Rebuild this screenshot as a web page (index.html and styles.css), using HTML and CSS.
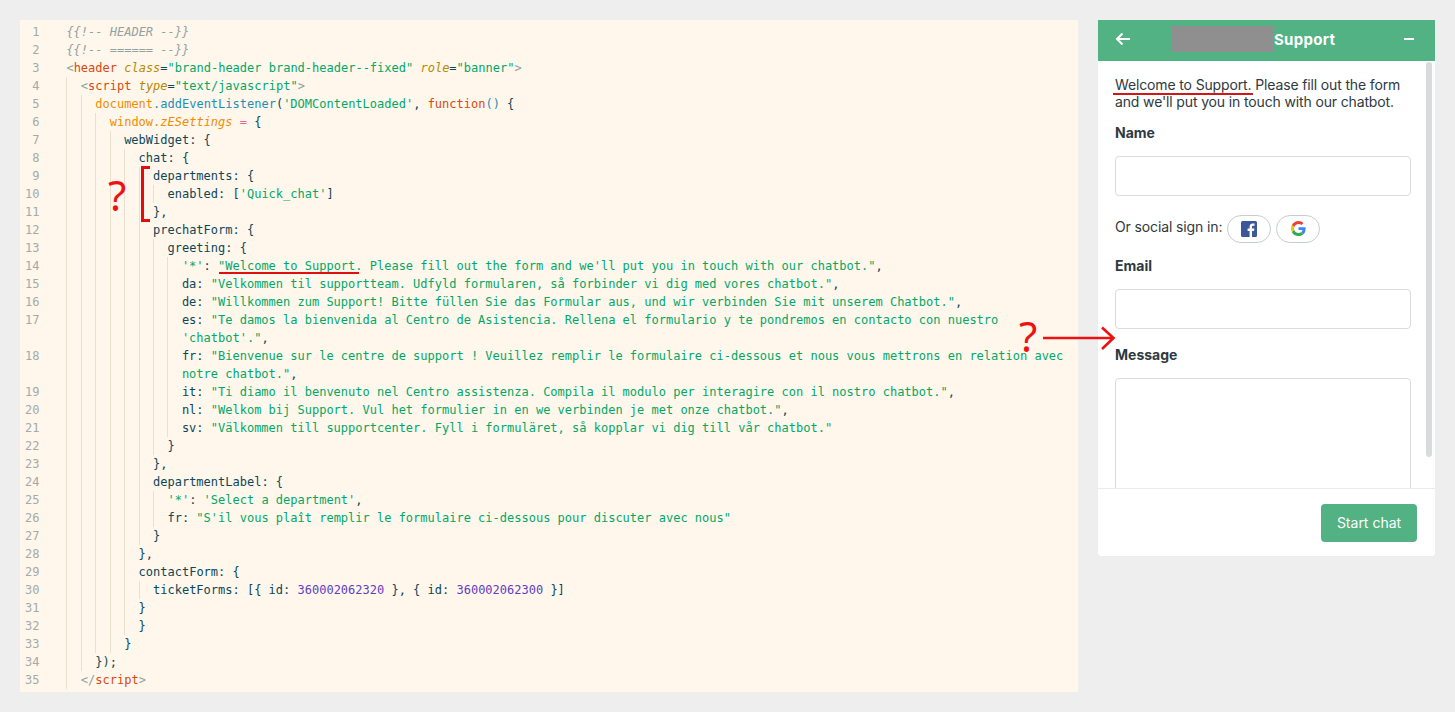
FILE: index.html
```html
<!DOCTYPE html>
<html lang="en">
<head>
<meta charset="utf-8">
<title>Support widget code</title>
<link rel="stylesheet" href="styles.css">
</head>
<body>
<main class="page">
<section class="code">
<div class="row"><span class="num">1</span><span class="txt c">{{!-- HEADER --}}</span></div>
<div class="row"><span class="num">2</span><span class="txt c">{{!-- ====== --}}</span></div>
<div class="row"><span class="num">3</span><span class="txt"><i class="p">&lt;</i><i class="t">header</i> <i class="a">class</i><i class="b">=</i><i class="s">"brand-header brand-header--fixed"</i> <i class="a">role</i><i class="b">=</i><i class="s">"banner"</i><i class="p">&gt;</i></span></div>
<div class="row"><span class="num">4</span><span class="ind"></span><span class="txt"><i class="p">&lt;</i><i class="t">script</i> <i class="a">type</i><i class="b">=</i><i class="s">"text/javascript"</i><i class="p">&gt;</i></span></div>
<div class="row"><span class="num">5</span><span class="ind"></span><span class="ind"></span><span class="txt"><i class="o">document</i><i class="m">.addEventListener</i>(<i class="s">'DOMContentLoaded'</i>, <i class="t">function</i><i class="m">()</i> {</span></div>
<div class="row"><span class="num">6</span><span class="ind"></span><span class="ind"></span><span class="ind"></span><span class="txt"><i class="o">window.</i><i class="oi">zESettings</i> <i class="e">=</i> {</span></div>
<div class="row"><span class="num">7</span><span class="ind"></span><span class="ind"></span><span class="ind"></span><span class="ind"></span><span class="txt">webWidget: {</span></div>
<div class="row"><span class="num">8</span><span class="ind"></span><span class="ind"></span><span class="ind"></span><span class="ind"></span><span class="ind"></span><span class="txt">chat: {</span></div>
<div class="row"><span class="num">9</span><span class="ind"></span><span class="ind"></span><span class="ind"></span><span class="ind"></span><span class="ind"></span><span class="ind"></span><span class="txt">departments: {</span></div>
<div class="row"><span class="num">10</span><span class="ind"></span><span class="ind"></span><span class="ind"></span><span class="ind"></span><span class="ind"></span><span class="ind"></span><span class="ind"></span><span class="txt">enabled: [<i class="s">'Quick_chat'</i>]</span></div>
<div class="row"><span class="num">11</span><span class="ind"></span><span class="ind"></span><span class="ind"></span><span class="ind"></span><span class="ind"></span><span class="ind"></span><span class="txt">},</span></div>
<div class="row"><span class="num">12</span><span class="ind"></span><span class="ind"></span><span class="ind"></span><span class="ind"></span><span class="ind"></span><span class="ind"></span><span class="txt">prechatForm: {</span></div>
<div class="row"><span class="num">13</span><span class="ind"></span><span class="ind"></span><span class="ind"></span><span class="ind"></span><span class="ind"></span><span class="ind"></span><span class="ind"></span><span class="txt">greeting: {</span></div>
<div class="row"><span class="num">14</span><span class="ind"></span><span class="ind"></span><span class="ind"></span><span class="ind"></span><span class="ind"></span><span class="ind"></span><span class="ind"></span><span class="ind"></span><span class="txt"><i class="s">'*'</i>: <i class="s">"Welcome to Support. Please fill out the form and we'll put you in touch with our chatbot."</i>,</span></div>
<div class="row"><span class="num">15</span><span class="ind"></span><span class="ind"></span><span class="ind"></span><span class="ind"></span><span class="ind"></span><span class="ind"></span><span class="ind"></span><span class="ind"></span><span class="txt">da: <i class="s">"Velkommen til supportteam. Udfyld formularen, så forbinder vi dig med vores chatbot."</i>,</span></div>
<div class="row"><span class="num">16</span><span class="ind"></span><span class="ind"></span><span class="ind"></span><span class="ind"></span><span class="ind"></span><span class="ind"></span><span class="ind"></span><span class="ind"></span><span class="txt">de: <i class="s">"Willkommen zum Support! Bitte füllen Sie das Formular aus, und wir verbinden Sie mit unserem Chatbot."</i>,</span></div>
<div class="row"><span class="num">17</span><span class="ind"></span><span class="ind"></span><span class="ind"></span><span class="ind"></span><span class="ind"></span><span class="ind"></span><span class="ind"></span><span class="ind"></span><span class="txt">es: <i class="s">"Te damos la bienvenida al Centro de Asistencia. Rellena el formulario y te pondremos en contacto con nuestro 'chatbot'."</i>,</span></div>
<div class="row"><span class="num">18</span><span class="ind"></span><span class="ind"></span><span class="ind"></span><span class="ind"></span><span class="ind"></span><span class="ind"></span><span class="ind"></span><span class="ind"></span><span class="txt">fr: <i class="s">"Bienvenue sur le centre de support ! Veuillez remplir le formulaire ci-dessous et nous vous mettrons en relation avec notre chatbot."</i>,</span></div>
<div class="row"><span class="num">19</span><span class="ind"></span><span class="ind"></span><span class="ind"></span><span class="ind"></span><span class="ind"></span><span class="ind"></span><span class="ind"></span><span class="ind"></span><span class="txt">it: <i class="s">"Ti diamo il benvenuto nel Centro assistenza. Compila il modulo per interagire con il nostro chatbot."</i>,</span></div>
<div class="row"><span class="num">20</span><span class="ind"></span><span class="ind"></span><span class="ind"></span><span class="ind"></span><span class="ind"></span><span class="ind"></span><span class="ind"></span><span class="ind"></span><span class="txt">nl: <i class="s">"Welkom bij Support. Vul het formulier in en we verbinden je met onze chatbot."</i>,</span></div>
<div class="row"><span class="num">21</span><span class="ind"></span><span class="ind"></span><span class="ind"></span><span class="ind"></span><span class="ind"></span><span class="ind"></span><span class="ind"></span><span class="ind"></span><span class="txt">sv: <i class="s">"Välkommen till supportcenter. Fyll i formuläret, så kopplar vi dig till vår chatbot."</i></span></div>
<div class="row"><span class="num">22</span><span class="ind"></span><span class="ind"></span><span class="ind"></span><span class="ind"></span><span class="ind"></span><span class="ind"></span><span class="ind"></span><span class="txt">}</span></div>
<div class="row"><span class="num">23</span><span class="ind"></span><span class="ind"></span><span class="ind"></span><span class="ind"></span><span class="ind"></span><span class="ind"></span><span class="txt">},</span></div>
<div class="row"><span class="num">24</span><span class="ind"></span><span class="ind"></span><span class="ind"></span><span class="ind"></span><span class="ind"></span><span class="ind"></span><span class="txt">departmentLabel: {</span></div>
<div class="row"><span class="num">25</span><span class="ind"></span><span class="ind"></span><span class="ind"></span><span class="ind"></span><span class="ind"></span><span class="ind"></span><span class="ind"></span><span class="txt"><i class="s">'*'</i>: <i class="s">'Select a department'</i>,</span></div>
<div class="row"><span class="num">26</span><span class="ind"></span><span class="ind"></span><span class="ind"></span><span class="ind"></span><span class="ind"></span><span class="ind"></span><span class="ind"></span><span class="txt">fr: <i class="s">"S'il vous plaît remplir le formulaire ci-dessous pour discuter avec nous"</i></span></div>
<div class="row"><span class="num">27</span><span class="ind"></span><span class="ind"></span><span class="ind"></span><span class="ind"></span><span class="ind"></span><span class="ind"></span><span class="txt">}</span></div>
<div class="row"><span class="num">28</span><span class="ind"></span><span class="ind"></span><span class="ind"></span><span class="ind"></span><span class="ind"></span><span class="txt">},</span></div>
<div class="row"><span class="num">29</span><span class="ind"></span><span class="ind"></span><span class="ind"></span><span class="ind"></span><span class="ind"></span><span class="txt">contactForm: {</span></div>
<div class="row"><span class="num">30</span><span class="ind"></span><span class="ind"></span><span class="ind"></span><span class="ind"></span><span class="ind"></span><span class="ind"></span><span class="txt">ticketForms: [{ id: <i class="n">360002062320</i> }, { id: <i class="n">360002062300</i> }]</span></div>
<div class="row"><span class="num">31</span><span class="ind"></span><span class="ind"></span><span class="ind"></span><span class="ind"></span><span class="ind"></span><span class="txt">}</span></div>
<div class="row"><span class="num">32</span><span class="ind"></span><span class="ind"></span><span class="ind"></span><span class="ind"></span><span class="ind"></span><span class="txt">}</span></div>
<div class="row"><span class="num">33</span><span class="ind"></span><span class="ind"></span><span class="ind"></span><span class="ind"></span><span class="txt">}</span></div>
<div class="row"><span class="num">34</span><span class="ind"></span><span class="ind"></span><span class="txt">});</span></div>
<div class="row row-last"><span class="num">35</span><span class="ind"></span><span class="txt"><i class="p">&lt;/</i><i class="t">script</i><i class="p">&gt;</i></span></div>
</section>

<aside class="widget">
<header class="w-head">
<svg class="w-back" width="16" height="14" viewBox="0 0 16 14" aria-hidden="true"><path d="M15 7H2M7.500 1.500L2 7l5.500 5.500" fill="none" stroke="#fff" stroke-width="2"/></svg>
<span class="w-redact"></span>
<span class="w-title">Support</span>
<span class="w-min"></span>
</header>
<div class="w-body">
<p class="w-intro">Welcome to Support. Please fill out the form and we'll put you in touch with our chatbot.</p>
<div class="w-label w-label-name">Name</div>
<div class="w-input"></div>
<div class="w-social">
<span class="w-social-text">Or social sign in:</span>
<span class="w-pill"><svg width="16" height="16" viewBox="0 0 16 16" aria-hidden="true"><rect width="16" height="16" rx="1.500" fill="#3b5998"/><path d="M11 16V10h2l.4-2.500H11V6c0-.8.300-1.300 1.300-1.300h1.200V2.500C13.200 2.400 12.500 2.400 11.800 2.400 10 2.400 8.600 3.500 8.600 5.600v1.900H6.600V10h2v6z" fill="#fff"/></svg></span>
<span class="w-pill"><svg width="15" height="15" viewBox="0 0 48 48" aria-hidden="true"><path fill="#EA4335" d="M24 9.500c3.500 0 6.700 1.200 9.200 3.600l6.900-6.900C35.900 2.400 30.500 0 24 0 14.600 0 6.500 5.400 2.600 13.200l8 6.200C12.500 13.700 17.800 9.500 24 9.500z"/><path fill="#4285F4" d="M46.900 24.500c0-1.600-.1-3.100-.4-4.500H24v9h12.900c-.6 3-2.200 5.500-4.700 7.200l7.700 6c4.500-4.200 7-10.300 7-17.700z"/><path fill="#FBBC05" d="M10.500 28.600c-.5-1.400-.8-3-.8-4.600s.3-3.200.8-4.600l-8-6.200C.9 16.500 0 20.100 0 24s.9 7.500 2.600 10.800l7.900-6.200z"/><path fill="#34A853" d="M24 48c6.500 0 11.900-2.100 15.900-5.800l-7.700-6c-2.200 1.400-4.900 2.300-8.200 2.300-6.200 0-11.500-4.200-13.400-9.900l-8 6.200C6.500 42.600 14.600 48 24 48z"/></svg></span>
</div>
<div class="w-label w-label-email">Email</div>
<div class="w-input"></div>
<div class="w-label w-label-msg">Message</div>
<div class="w-area"></div>
<span class="w-scroll"></span>
</div>
<footer class="w-foot"><span class="w-btn">Start chat</span></footer>
</aside>
</main>

<div class="mark q1">?</div>
<div class="mark bracket"></div>
<div class="mark ul1"></div>
<div class="mark ul2"></div>
<div class="mark q2">?</div>
<svg class="mark arrow" width="74" height="26" viewBox="0 0 74 26" aria-hidden="true"><path d="M0 13H70.500M59 2.500L70.500 13 59 24" fill="none" stroke="#ee1111" stroke-width="2.600"/></svg>
</body>
</html>
```
FILE: styles.css
```css
* { box-sizing: border-box; }
html, body { margin: 0; height: 100%; }
body { position: relative; background: #eeeeee; overflow: hidden; }
.page { display: flex; align-items: flex-start; gap: 20px; padding: 20px; }

.code {
  width: 1058px;
  height: 672px;
  padding: 3px 12px 0 0;
  background: #fff7ec;
  color: #0c4657;
  font: 12px/18px "DejaVu Sans Mono", "Liberation Mono", monospace;
}
.row { display: flex; align-items: stretch; }
.row-last { padding-bottom: 3px; }
.num { flex: 0 0 46.4px; padding-right: 27px; text-align: right; color: #a4aaa8; }
.ind { flex: 0 0 14.450px; border-left: 1px solid #ebdfce; }
.txt { flex: 1; min-width: 0; white-space: pre-wrap; }
.txt i { font-style: normal; }
.c { color: #93a1a1; font-style: italic; }
.p { color: #93a1a1; }
.t { color: #d9480f; }
.txt .a { color: #b58900; font-style: italic; }
.b { color: #0c4657; }
.s { color: #00a868; }
.o { color: #f08c00; }
.txt .oi { color: #f08c00; font-style: italic; }
.m { color: #1c8fb5; }
.e { color: #ec5f8f; }
.n { color: #5f3dc4; }

.widget {
  width: 337px;
  height: 536px;
  display: flex;
  flex-direction: column;
  background: #fff;
  border-radius: 0 0 4px 4px;
  color: #2f3941;
  font: 14px/17px Inter, "Liberation Sans", sans-serif;
}
.w-head {
  flex: 0 0 41px;
  display: flex;
  align-items: center;
  padding: 0 21px 3px 17px;
  background: #52b283;
  color: #fff;
}
.w-back { flex: none; margin-right: 40px; }
.w-redact { flex: none; width: 102px; height: 26px; margin-right: 1px; background: #8f8f8f; }
.w-title { flex: 1; font-weight: 700; font-size: 15px; letter-spacing: .3px; }
.w-min { flex: none; width: 10px; height: 2px; background: #fff; }

.w-body { position: relative; flex: 1; min-height: 0; overflow: hidden; padding: 14.500px 24px 0 17px; }
.w-intro { margin: 0; letter-spacing: -.14px; }
.w-label { font-weight: 700; margin-bottom: 15px; }
.w-label-name { margin-top: 14px; }
.w-label-email { margin-top: 14px; }
.w-label-msg { margin-top: 17px; }
.w-input { height: 40px; border: 1px solid #d8dcde; border-radius: 4px; }
.w-area { height: 140px; border: 1px solid #d8dcde; border-radius: 4px; }
.w-social { display: flex; align-items: center; gap: 5px; margin-top: 19px; height: 28px; }
.w-social-text { margin-top: -4px; letter-spacing: -.12px; }
.w-pill {
  display: flex;
  align-items: center;
  justify-content: center;
  width: 44px;
  height: 28px;
  border: 1px solid #c8cdd0;
  border-radius: 14px;
}
.w-scroll {
  position: absolute;
  top: 1px;
  right: 3px;
  width: 6px;
  height: 395px;
  border-radius: 3px;
  background: #d9dadb;
}
.w-foot {
  flex: 0 0 68px;
  display: flex;
  justify-content: flex-end;
  align-items: flex-start;
  padding: 15px 18px 0 0;
  border-top: 1px solid #e9ebed;
}
.w-btn {
  width: 96px;
  height: 38px;
  display: flex;
  align-items: center;
  justify-content: center;
  padding-bottom: 1px;
  border-radius: 4px;
  background: #52b283;
  color: #fff;
}

.mark { position: absolute; }
.q1, .q2 { color: #ee1111; font: 42px/42px "Noto Sans", sans-serif; }
.q1 { left: 108px; top: 174px; }
.q2 { left: 1019px; top: 315px; }
.bracket {
  left: 141px;
  top: 166px;
  width: 9px;
  height: 56px;
  border: 3px solid #e30d0d;
  border-right: 0;
}
.ul1 { left: 219px; top: 272px; width: 140px; height: 2px; background: #e01010; }
.ul2 { left: 1113px; top: 93px; width: 140px; height: 2px; background: #d01818; }
.arrow { left: 1043px; top: 325px; }
```
